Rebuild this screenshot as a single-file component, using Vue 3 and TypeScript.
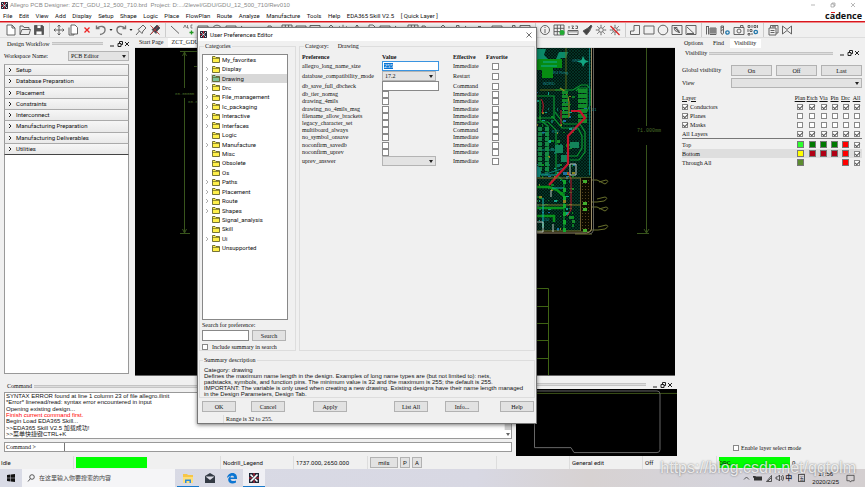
<script setup lang="ts">
import { ref } from 'vue'

interface Category { name: string; open: boolean }
interface Preference { name: string; kind: 'text' | 'select' | 'check'; value?: string; effective: string }
interface Layer { name: string; check?: boolean; cells: string[]; selected?: boolean }

const menus = ['File', 'Edit', 'View', 'Add', 'Display', 'Setup', 'Shape', 'Logic', 'Place', 'FlowPlan', 'Route', 'Analyze', 'Manufacture', 'Tools', 'Help', 'EDA365 Skill V2.5', '[ Quick Layer ]']

/* Icon bodies share a 14 x 14 box. */
const icons: Record<string, string> = {
  file: '<path d="M3 2h5l3 3v7H3zM8 2v3h3" fill="#fff"/>',
  open: '<path d="M2 11.500V3h3l1 1.500h5V6M2 11.500L4 6.500h8.500L11 11.500z" fill="#eee"/>',
  save: '<path d="M2.500 2.500h8l1 1v8h-9z" fill="#555"/><path d="M5 2.500v3h4v-3M4 11.500V8h6v3.500" fill="#fff"/>',
  move: '<path d="M7 2v10M2 7h10M5.500 3.500L7 2l1.500 1.500M5.500 10.500L7 12l1.500-1.500M3.500 5.500L2 7l1.500 1.500M10.500 5.500L12 7l-1.500 1.500"/>',
  copy: '<path d="M3 4.500v7.500h5v-1"/><path d="M5 2h4l2.500 2.500V11H5z" fill="#fff"/>',
  del: '<path d="M4.500 4.500l5 5M9.500 4.500l-5 5" stroke="#e22" stroke-width="1.300"/>',
  undo: '<path d="M2.500 2.500v3h3M3 5.500C6 2 11.500 3 11 7.500c-.4 2.500-2 3.500-5 4" stroke-width="1.400" stroke="#777"/>',
  redo: '<path d="M11.500 2.500v3h-3M11 5.500C8 2 2.500 3 3 7.500c.4 2.500 2 3.500 5 4" stroke-width="1.400" stroke="#777"/>',
  pin: '<path d="M2 12l3.500-4M4 6.500l4 4 1-2.500 3-3-3-3-3 3z" fill="#eee"/>',
  unpin: '<path d="M2 12l3.500-4M4 6.500l4 4 1-2.500 3-3-3-3-3 3z" fill="#345"/><path d="M2.500 2.500l9 9M11 2.500L3 11" stroke="#b33"/>',
  line: '<path d="M3 3l8 7.500"/>',
  text: '<path d="M1.500 5l1.500-3 1.500 3M5.500 2v3h1.500M10.500 2H9v3h1.500" stroke-width=".7"/><path d="M9.500 7.500v4M7.500 9.500h4" stroke="#292" stroke-width="1.300"/>',
  info: '<circle cx="7" cy="7" r="4.500"/><path d="M7 6v4M7 4v1"/>',
  grid: '<path d="M2 2h10v10H2zM2 5.300h10M2 8.600h10M5.300 2v10M8.600 2v10"/><circle cx="10" cy="9.500" r="2.500" fill="#2a3" stroke="none"/>',
  ruler: '<path d="M2 7.500h10v4H2zM4 7.500v2M6 7.500v2M8 7.500v2M10 7.500v2M3 3v2.500M5.500 3h2L6 5.500h2M9.500 3h2v2.500h-2"/>',
  brush: '<path d="M3 8l5-3 2 2.500L6.500 12zM8 5l3-3 1 1-2 4" fill="#444"/>',
  sun: '<circle cx="7" cy="7" r="2.300"/><path d="M7 1.800v2M7 10.200v2M1.800 7h2M10.200 7h2M3.300 3.300l1.400 1.400M9.300 9.300l1.400 1.400M10.700 3.300L9.300 4.700M4.700 9.300l-1.400 1.400"/>',
  sunoff: '<circle cx="7" cy="7" r="2.300"/><path d="M7 1.800v2M7 10.200v2M1.800 7h2M10.200 7h2M3.300 10.700l1.400-1.400M10.700 3.300L9.300 4.700"/><path d="M2.500 3l9 9" stroke="#d22" stroke-width="1.300"/>',
  poly: '<path d="M6 2.500h5.500v9h-9V8H6z"/>',
  rect: '<path d="M2 3h10v8H2z"/>',
  circle: '<circle cx="7" cy="7" r="4.800"/>',
  shapesel: '<path d="M2 2.500h10v9H2zM4 4.500h3v2l2 1v2l-4-2zM5 5l5 5"/>',
  wedge: '<path d="M2 2.500h10v9H2zM3 4l7 6.500H3"/>',
  drill: '<path d="M2.500 3v8.500M4.500 3v8.500M2.500 3.500h2M6 5h6v6.500H6zM6 7h6M6 9h6M8 5v6.500M10 5v6.500"/>',
  drillset: '<path d="M3 3h2.500v7L4.300 11.500 3 10zM3 5l2.500-1M3 7.500l2.500-1"/><circle cx="9.500" cy="9.500" r="1.700" stroke="#27a" stroke-width="1.300"/>',
  camera: '<path d="M2 4.500h10v7H2zM8.500 4V2.500H11V4.500"/><circle cx="7" cy="8" r="2"/>',
  param: '<path d="M2 2.500h2v2H2zM6 2v3M8 2.500h2v2H8zM2 6v3M4 6.500h2v2H4zM2 10.500h2v1.500H2zM6 10v2M11.500 2v3"/><circle cx="9.800" cy="9" r="1.700" stroke="#27a" stroke-width="1.300"/>',
  artwork: '<path d="M3 5h7v7H3zM4.500 5V2.500H12V10h-2M4.500 7.500h4M4.500 9.500h4M6 3.800h4"/>',
  bowtie: '<path d="M2.500 3v8L7 7.500 11.500 11V3L7 6.500z"/>',
}

const openTools = ['file', 'open', 'save']
const editTools = ['move', 'copy', 'del', 'undo', 'caret', 'redo', 'caret', 'pin', 'unpin']
const drawTools = ['line', 'text', 'rect', 'circle', 'rect', 'line', 'del', 'open', 'grid', 'rect', 'wedge', 'pin', 'sun', 'move', 'copy', 'rect', 'line', 'grid', 'open', 'pin', 'camera', 'line', 'drill', 'rect', 'camera', 'wedge']
const viewTools = ['info', 'grid', 'ruler', 'brush', 'sun', 'sunoff']
const toolGroups = [openTools, editTools, drawTools, viewTools, ['poly', 'rect', 'circle', 'shapesel', 'wedge'], ['drill', 'drillset', 'camera', 'param'], ['artwork', 'bowtie']]

const workflow = ['Setup', 'Database Preparation', 'Placement', 'Constraints', 'Interconnect', 'Manufacturing Preparation', 'Manufacturing Deliverables', 'Utilities']

const leaves = ['My_favorites', 'Logic', 'Misc', 'Obsolete', 'Os', 'Signal_analysis', 'Skill', 'Unsupported']
const categories: Category[] = ['My_favorites', 'Display', 'Drawing', 'Drc', 'File_management', 'Ic_packaging', 'Interactive', 'Interfaces', 'Logic', 'Manufacture', 'Misc', 'Obsolete', 'Os', 'Paths', 'Placement', 'Route', 'Shapes', 'Signal_analysis', 'Skill', 'Ui', 'Unsupported']
  .map((name) => ({ name, open: !leaves.includes(name) }))
const selected = ref('Drawing')

const flag = (name: string, effective = 'Immediate'): Preference => ({ name, kind: 'check', effective })
const preferenceBlocks: Preference[][] = [
  [
    { name: 'allegro_long_name_size', kind: 'text', value: '255', effective: 'Immediate' },
    { name: 'database_compatibility_mode', kind: 'select', value: '17.2', effective: 'Restart' },
    { name: 'db_save_full_dbcheck', kind: 'text', value: '', effective: 'Command' },
  ],
  [flag('db_tier_nomsg'), flag('drawing_4mils'), flag('drawing_no_4mils_msg'), flag('filename_allow_brackets'), flag('legacy_character_set'), flag('multiboard_always', 'Command'), flag('no_symbol_onsave'), flag('noconfirm_savedb'), flag('noconfirm_uprev')],
  [{ name: 'uprev_answer', kind: 'select', value: '', effective: 'Immediate' }],
]

const summary = [
  'Category: drawing',
  'Defines the maximum name length in the design. Examples of long name types are (but not limited to): nets,',
  'padstacks, symbols, and function pins. The minimum value is 32 and the maximum is 255; the default is 255.',
  'IMPORTANT: The variable is only used when creating a new drawing. Existing designs have their name length managed',
  'in the Design Parameters, Design Tab.',
]

const log = [
  'SYNTAX ERROR found at line 1 column 23 of file allegro.ilinit',
  '*Error* lineread/read: syntax error encountered in input',
  'Opening existing design...',
  'Finish current command first.',
  'Begin Load EDA365 Skill...',
  '>>EDA365 Skill V2.5 加载成功!',
  '>>菜单快捷键CTRL+K',
]

const layerHeads = ['Plan', 'Etch', 'Via', 'Pin', 'Drc', 'All']
const on = ['on', 'on', 'on', 'on', 'on', 'on']
const off = ['off', 'off', 'off', 'off', 'off', 'off']
const classRows: Layer[] = [
  { name: 'Conductors', check: true, cells: on },
  { name: 'Planes', check: true, cells: off },
  { name: 'Masks', check: true, cells: off },
  { name: 'All Layers', cells: on },
]
const layerRows: Layer[] = [
  { name: 'Top', cells: ['#2cff2c', '#007800', '#007800', '#007800', '#ff0000', 'on'] },
  { name: 'Bottom', cells: ['#ffff00', '#b00014', '#b00014', '#b00014', '#ff0000', 'on'], selected: true },
  { name: 'Through All', cells: ['#5c8c30', '', '', '', '#ff0000', 'on'] },
]

/* Repeatable scatter of pads over the visible part of the board. */
let seed = 7
const rnd = () => (seed = (seed * 16807) % 2147483647) / 2147483647
const padColors = ['#0a8f1e', '#0b7a26', '#12a08a', '#0c6b5c', '#178a2c', '#8a8420', '#1b6fa0']
const pads = Array.from({ length: 230 }, () => {
  const row = Math.floor(rnd() * 44)
  return {
    x: 536 + Math.floor(rnd() * 17) * 3,
    y: 56 + row * 4,
    w: 1 + Math.floor(rnd() * 3),
    h: 1 + Math.floor(rnd() * 3),
    fill: padColors[Math.floor(rnd() * padColors.length)],
  }
}).filter((p) => p.y > 88 && (p.x < 575 || (p.y < 118 && p.x > 574)))
const hooks = [180, 202, 208, 229]
</script>

<template>
  <div class="app">
    <header class="titlebar">
      <svg class="logo" viewBox="0 0 8 8"><rect width="8" height="8" fill="#222c3c" /><path d="M1 1l2 2M7 1L5 3M1 7l2-2M7 7L5 5M3 4h2" stroke="#fff" /><path d="M4 0v3M4 5v3M0 4h2" stroke="#d23" /></svg>
      <span>Allegro PCB Designer: ZCT_GDU_12_500_710.brd&nbsp; Project: D:.../2level/GDU/GDU_12_500_710/Rev010</span>
      <div class="winbtns">
        <button aria-label="Minimize"><svg viewBox="0 0 6 6"><path d="M1 3h4" /></svg></button>
        <button aria-label="Restore"><svg viewBox="0 0 6 6"><path d="M1 2h3v3H1zM2 2V1h3v3H4" /></svg></button>
        <button aria-label="Close"><svg viewBox="0 0 6 6"><path d="M1 1l4 4M5 1L1 5" /></svg></button>
      </div>
    </header>
    <nav class="menubar">
      <div class="menus"><a v-for="m in menus" :key="m" href="#">{{ m }}</a></div>
      <strong class="brand">c<i>a</i>dence</strong>
    </nav>
    <div class="toolbar">
      <div v-for="(g, gi) in toolGroups" :key="gi" class="tools">
        <button v-for="(t, ti) in g" :key="ti" :class="{ caret: t === 'caret' }" :aria-label="t">
          <svg v-if="t !== 'caret'" viewBox="0 0 14 14" v-html="icons[t]"></svg>
          <svg v-else viewBox="0 0 6 14"><path d="M1.500 6h3l-1.500 2z" fill="#222" stroke="none" /></svg>
        </button>
      </div>
    </div>

    <div class="workspace">
      <section class="center">
        <div class="upper">
          <aside class="workflow">
            <div class="dockhead"><span>Design Workflow</span><hr /><svg class="dockicons" viewBox="0 0 20 8"><path d="M1 6h4M9 3.500h3v3H9zM10.500 3V1.500h3v3H12M16 2l4 4M20 2l-4 4" /></svg></div>
            <div class="wsname"><label for="ws">Workspace Name:</label><span class="select"><select id="ws"><option>PCB Editor</option></select></span></div>
            <div class="accordion">
              <button v-for="w in workflow" :key="w"><svg viewBox="0 0 4 6"><path d="M1 1l2 2-2 2" /></svg>{{ w }}</button>
            </div>
            <div class="blank"></div>
          </aside>
          <div class="editor">
            <div class="doctabs"><a href="#">Start Page</a><a href="#" class="active">ZCT_GDU_12_500_710</a></div>
            <svg class="board" viewBox="135 48 540 327" preserveAspectRatio="xMinYMin slice">
              <defs>
                <pattern id="hatch" width="3" height="3" patternUnits="userSpaceOnUse"><rect width="3" height="3" fill="#00170f" /><path d="M0 3L3 0M0 0l3 3" stroke="#064636" stroke-width=".5" /></pattern>
                <pattern id="dots" width="3" height="3" patternUnits="userSpaceOnUse"><rect width="3" height="3" fill="#0d0a00" /><path d="M0 0h1v1H0z" fill="#54421c" stroke="none" /></pattern>
              </defs>
              <g fill="none" stroke="#38541c">
                <path d="M184.500 52v36M184.500 98v135M180 51.500h17M182.500 56l2-4 2 4M180 233.500h10M182.500 229l2 4 2-4M194 66.500h5" />
                <path d="M646.500 48v78M646.500 145v88M637 233.500h12M644 229l2.500 4 2.500-4" />
                <path d="M536 288.500h12.500V375M536 306.500h12M536 323.500h12M536 340.500h12M536 358.500h12" stroke="#3f6414" />
              </g>
              <g class="dims"><text x="175" y="95">80.000mm</text><text x="188" y="103">60.000</text><text class="big" x="637" y="132">71.000mm</text></g>
              <rect x="500" y="48" width="91" height="183" fill="url(#hatch)" />
              <g stroke="none">
                <path d="M536 49h10l-2 6 4 4h8l3-7h9l-2 6h-5l-3 4h-22z" fill="#0b8a68" />
                <path d="M538 59h24v9h-9v10h-11v-8h-6v-8z" fill="#078b12" />
                <path d="M583 56l2 4 4 1.500-4 1.500-2 4-1.500-4-4.500-1.500 4.500-1.500z" fill="#12a682" />
              </g>
              <path d="M543 62h14M541 66h16" stroke="#0db09a" />
              <path d="M566 48v42h-26" fill="none" stroke="#5c6c18" />
              <g fill="none" stroke="#0a9630" stroke-width="1.200">
                <path d="M555 90h18l8-5h6l3 4v16l-4 8" /><path d="M576 91l3-3h8v18l-6 6" />
                <path d="M552 116l10 12h16l4 8v12l-5 8h-8" /><path d="M555 112l9 12h16l5 8v20l-6 8h-9" />
                <path d="M560 88q8 4 9 14v16" stroke="#988f1d" /><path d="M536 96h18v22h-18M540 100v20l8 6v46" />
                <path d="M536 122h12l8 8v44l8 8v48" /><path d="M536 150h22M536 174h10l18-6" stroke="#0b7a76" />
              </g>
              <rect v-for="(p, i) in pads" :key="i" :x="p.x" :y="p.y" :width="p.w" :height="p.h" :fill="p.fill" />
              <g fill="#128b2a"><rect v-for="n in 7" :key="n" x="562" :y="87 + n * 4" width="6" height="3" /><rect v-for="n in 7" :key="-n" x="578" :y="84 + n * 5" width="9" height="4" /></g>
              <g fill="#148a45"><rect v-for="n in 9" :key="n" x="538" :y="122 + n * 5" width="4" height="4" /><rect v-for="n in 9" :key="-n" x="545" :y="122 + n * 5" width="4" height="4" /></g>
              <path d="M555 145h8v8h-8zM570 142h9v6h-9zM561 155h8v7h-8z" fill="#13845a" stroke="none" />
              <g fill="none" stroke="#08921c" stroke-width="2.500"><path d="M536 187h13l8 3 7 6M536 208h28M536 216h18v6" /></g>
              <path d="M536 165q7 3 4 12h-4z" fill="#11877c" stroke="none" />
              <path d="M541 175h17M552 188h12M543 198v30" stroke="#15a5a0" stroke-width="1.200" />
              <g fill="none" stroke="#c5162c"><path d="M571 111h9l5 7-17 18v28l-19 21" stroke-width="2.200" /><path d="M541 99q4 5 1 14M561 110v14M568 172l3 7v31l-4 6" /></g>
              <path d="M536 178h55v53h-55M536 205h55" fill="none" stroke="#7c7a2e" />
              <rect x="580" y="178" width="11" height="53" fill="url(#dots)" />
              <path d="M580.500 178v53" stroke="#9a8446" stroke-width=".7" />
              <path d="M570 164h6v11h-6zM536 222h7v10h-7M553 224v8M551 190v7" fill="none" stroke="#b9c9c2" />
              <g v-for="h in hooks" :key="h"><rect x="583" :y="h" width="4" height="3" fill="#42ae2e" /></g>
              <g fill="#12a82e"><rect v-for="n in 7" :key="n" x="563" :y="172 + n * 8" width="3" height="4" /></g>
              <g fill="none" stroke="#69702c"><path d="M591 180h6l8 4q5-3 1-4l-7 2M591 202h6l7-1q5-3 1-4l-8 2M591 207h6l8 4q5-3 1-4l-7 2M591 230h7l7-1q5-3 1-4l-8 2M575 234h17" /></g>
              <path d="M589.500 48v127" stroke="#0b746e" /><path d="M591.500 48v181q-1 4-5 4H536" fill="none" stroke="#9a8b68" /><path d="M593.500 48v182q-1 4-4 4" fill="none" stroke="#60605a" />
              <g class="refs"><text x="572" y="62">GND</text><text x="553" y="74">R4 Riing</text><text x="543" y="85">W2RD</text><text x="592" y="111">L1</text><text x="552" y="133">R22</text><text x="570" y="130">C14</text><text x="542" y="221">U10</text></g>
            </svg>
          </div>
        </div>
        <div class="lower">
          <section class="command">
            <div class="dockhead"><span>Command</span><hr /></div>
            <div class="log"><p v-for="(l, i) in log" :key="i" :class="{ error: i === 3 }">{{ l }}</p><span class="scroll"></span></div>
            <div class="entry"><label for="cmd">Command &gt;</label><input id="cmd" type="text" /></div>
          </section>
          <section class="world">
            <div class="dockhead"><hr /><svg class="dockicons" viewBox="0 0 20 8"><path d="M1 6h4M9 3.500h3v3H9zM10.500 3V1.500h3v3H12M16 2l4 4M20 2l-4 4" /></svg></div>
            <svg class="map" viewBox="0 0 161 68" preserveAspectRatio="none"><rect width="161" height="68" fill="#000" /><path d="M0 4.500h161" stroke="#3c5318" /><path d="M18.500 2v57.500H55l3 5h83q3 0 3-3V5q0-3-3-3H18" fill="none" stroke="#686868" /></svg>
          </section>
        </div>
      </section>

      <aside class="visibility">
        <div class="docktabs"><a href="#">Options</a><a href="#">Find</a><a href="#" class="active">Visibility</a></div>
        <div class="dockhead"><span>Visibility</span><hr /><svg class="dockicons" viewBox="0 0 20 8"><path d="M1 6h4M9 3.500h3v3H9zM10.500 3V1.500h3v3H12M16 2l4 4M20 2l-4 4" /></svg></div>
        <div class="global"><span>Global visibility</span><button class="btn">On</button><button class="btn">Off</button><button class="btn">Last</button></div>
        <div class="viewrow"><label for="view">View</label><span class="select"><select id="view"><option></option></select></span></div>
        <table class="layers">
          <thead><tr><th>Layer</th><th v-for="h in layerHeads" :key="h">{{ h }}</th></tr></thead>
          <tbody>
            <tr v-for="r in classRows" :key="r.name">
              <th><label v-if="r.check"><input type="checkbox" checked />{{ r.name }}</label><template v-else>{{ r.name }}</template></th>
              <td v-for="(c, i) in r.cells" :key="i"><input type="checkbox" :checked="c === 'on'" :aria-label="r.name + ' ' + layerHeads[i]" /></td>
            </tr>
          </tbody>
          <tbody class="colors">
            <tr v-for="r in layerRows" :key="r.name" :class="{ selected: r.selected }">
              <th>{{ r.name }}</th>
              <td v-for="(c, i) in r.cells" :key="i">
                <input v-if="c === 'on'" type="checkbox" checked :aria-label="r.name + ' ' + layerHeads[i]" />
                <button v-else-if="c" class="swatch" :style="{ background: c }" :aria-label="r.name + ' ' + layerHeads[i]"></button>
              </td>
            </tr>
          </tbody>
        </table>
        <label class="enable"><input type="checkbox" />Enable layer select mode</label>
      </aside>
    </div>

    <footer class="status">
      <div>Idle</div><div><b class="green"></b></div><div class="file">Nodrill_Legend</div><div>1737.000, 2650.000</div>
      <div class="units"><button class="btn">mils</button><button class="btn">P</button><button class="btn">A</button></div>
      <div></div><div>General edit</div><div>Off</div><div><b class="green">DRC</b>0</div>
    </footer>

    <footer class="taskbar">
      <button class="start" aria-label="Start"><svg viewBox="0 0 8 8"><path d="M0 1l3.500-.500v3.200H0zM4 .400L8 0v3.700H4zM0 4.200h3.500v3.200L0 7zM4 4.200h4V8l-4-.500z" fill="#111" /></svg></button>
      <label class="search"><svg viewBox="0 0 8 8"><circle cx="5" cy="3" r="2.300" fill="none" stroke="#333" stroke-width=".8" /><path d="M3.300 4.700L1 7.500" stroke="#333" stroke-width=".8" /></svg><input type="text" placeholder="在这里输入你要搜索的内容" aria-label="Search" /></label>
      <div class="pinned">
        <button class="run" aria-label="Files"><svg viewBox="0 0 12 12"><path d="M1 2h4l1 1h5v8H1z" fill="#f6c648" /><path d="M1 5h10v6H1z" fill="#ffdf78" /><path d="M3 11V7.500h6V11H7.500V9h-3v2z" fill="#2b8bd8" /></svg></button>
        <button aria-label="Mail"><svg viewBox="0 0 12 12"><path d="M1 4l5-3 5 3v7H1z" fill="#333a44" /><path d="M1.500 4.500h9L6 8z" fill="#dcdce6" /></svg></button>
        <button aria-label="Browser"><svg viewBox="0 0 12 12"><path d="M1 6C1.500 2.500 4 1 6.500 1 10 1 11.300 4 11 7H4.500c.5 2.500 3.500 2.500 5.500 1.500V10.500C6 12.500 2 11 2.200 7.500 2.400 5.500 4 4 5.500 3.500 4.700 4.200 4.500 5 4.500 5.500h3.700C8 3 4 3 1 6z" fill="#0d76d2" /></svg></button>
        <button class="run active" aria-label="PCB Designer"><svg viewBox="0 0 12 12"><rect x="1" y="1" width="10" height="10" fill="#1c2636" /><path d="M2.500 2.500l2.500 2.500M9.500 2.500l-7 7M7 7l2.500 2.500" stroke="#fff" stroke-width="1.600" /><path d="M6 1v3M6 8v3M1 6h3M8 6h3" stroke="#d23" /></svg></button>
      </div>
      <div class="tray">
        <svg viewBox="0 0 42 10"><path d="M2 6.500l2.500-2.500L7 6.500M24.500 8.500l5-6v6zM26 8l3-3M34 4h1.500l2-2v6l-2-2H34zM39 3q2 2 0 4M40.500 2q2.500 3 0 6" fill="none" stroke="#333" stroke-width=".8" /><path d="M12 3.500h8v4h-8zM11 5V3h3" fill="#333" stroke="none" /></svg>
        <b>中</b><b class="ime">五</b>
        <time>17:56<br />2020/2/25</time>
        <svg class="note" viewBox="0 0 10 10"><path d="M1 1.500h8v6H6L5 9 4 7.500H1z" fill="none" stroke="#333" stroke-width=".8" /></svg>
      </div>
    </footer>

    <section class="dialog" role="dialog" aria-label="User Preferences Editor">
      <header>
        <svg class="logo" viewBox="0 0 8 8"><rect width="8" height="8" fill="#222c3c" /><path d="M1 1l2 2M7 1L5 3M1 7l2-2M7 7L5 5M3 4h2" stroke="#fff" /><path d="M4 0v3M4 5v3M0 4h2" stroke="#d23" /></svg>
        <h1>User Preferences Editor</h1>
        <button aria-label="Close"><svg viewBox="0 0 6 6"><path d="M.5 .5l5 5M5.500 .5l-5 5" /></svg></button>
      </header>
      <div class="panes">
        <fieldset class="cats">
          <legend>Categories</legend>
          <ul>
            <li v-for="c in categories" :key="c.name" :class="{ selected: selected === c.name }" @click="selected = c.name">
              <svg class="chev" viewBox="0 0 4 6"><path v-if="c.open" d="M1 1l2 2-2 2" /></svg>
              <span><svg viewBox="0 0 8 7"><path d="M.5 6.500v-6h2.500l1 1h3.500v5z" :fill="selected === c.name ? '#7fc49a' : '#fff04a'" stroke="#54521c" stroke-width=".8" /><path d="M.5 2.500h7" stroke="#54521c" stroke-width=".6" /></svg>{{ c.name }}</span>
            </li>
          </ul>
          <label for="find">Search for preference:</label>
          <div class="find"><input id="find" type="text" /><button class="btn">Search</button></div>
          <label class="include"><input type="checkbox" />Include summary in search</label>
        </fieldset>
        <fieldset class="prefs">
          <legend>Category:<span>Drawing</span></legend>
          <table>
            <thead><tr><th>Preference</th><th>Value</th><th>Effective</th><th>Favorite</th></tr></thead>
            <tbody v-for="(block, bi) in preferenceBlocks" :key="bi" :class="'block' + bi">
              <tr v-for="p in block" :key="p.name">
                <td><label :for="p.name">{{ p.name }}</label></td>
                <td>
                  <input v-if="p.kind === 'text'" :id="p.name" type="text" :value="p.value" :class="{ focused: p.value }" />
                  <span v-else-if="p.kind === 'select'" class="select"><select :id="p.name"><option>{{ p.value }}</option></select></span>
                  <input v-else :id="p.name" type="checkbox" />
                </td>
                <td>{{ p.effective }}</td>
                <td><input type="checkbox" :aria-label="'Favorite ' + p.name" /></td>
              </tr>
            </tbody>
          </table>
        </fieldset>
      </div>
      <fieldset class="summary">
        <legend>Summary description</legend>
        <p v-for="s in summary" :key="s">{{ s }}</p>
      </fieldset>
      <div class="actions">
        <button class="btn">OK</button><button class="btn">Cancel</button><button class="btn">Apply</button><button class="btn">List All</button><button class="btn">Info...</button><button class="btn">Help</button>
      </div>
      <p class="range">Range is 32 to 255.</p>
    </section>

    <div class="watermark">https://blog.csdn.net/qqtolm</div>
  </div>
</template>

<style>
body { margin: 0; background: #f0f0f0; overflow: hidden; }
</style>

<style scoped>
.app { --ui: Roboto, "Noto Sans CJK SC", sans-serif; --song: "Liberation Serif", "Noto Sans CJK SC", serif; --wide: "Liberation Sans", "Noto Sans CJK SC", sans-serif; position: relative; display: flex; flex-direction: column; height: 100vh; background: #f0f0f0; color: #111; font: 6px/8px var(--song); }
* { box-sizing: border-box; }
button, input, select { margin: 0; padding: 0; border: 0; background: none; font: inherit; color: inherit; min-width: 0; }
a { color: inherit; text-decoration: none; }
p, ul, h1 { margin: 0; padding: 0; }
svg { display: block; fill: none; stroke: #333; }
svg rect, svg text { stroke: none; }
table { border-collapse: collapse; }
th { font-weight: 400; text-align: left; }

.titlebar { display: flex; align-items: center; gap: 2px; height: 10px; padding-left: 1px; background: #fff; color: #888; font-family: var(--wide); }
.logo { width: 7px; height: 7px; }
.winbtns { display: flex; gap: 14px; margin-left: auto; padding-right: 9px; }
.winbtns svg { width: 6px; height: 6px; stroke: #888; stroke-width: .6; }
.menubar { display: flex; align-items: center; height: 12px; padding: 0 3px; background: #fff; border-bottom: 1px solid #d8161e; font-family: var(--ui); white-space: nowrap; }
.menus { display: flex; justify-content: space-between; width: 435px; }
.brand { margin-left: auto; font: 700 9px/10px "Open Sans", sans-serif; }
.brand i { position: relative; font-style: normal; }
.brand i::after { content: ""; position: absolute; left: 1px; top: 3px; width: 4px; height: 1px; background: #d22; }
.toolbar { display: flex; height: 16px; padding-left: 4px; border-top: 1px solid #e88; border-bottom: 1px solid #ddd; }
.tools { display: flex; align-items: center; flex: none; }
.tools + .tools { margin-left: 3px; padding-left: 2px; border-left: 1px solid #ccc; }
.tools button { width: 14px; height: 14px; }
.tools button.caret { width: 6px; }
.tools svg { width: 100%; height: 14px; stroke: #555; stroke-width: .9; }

.workspace { display: flex; flex: 1; min-height: 0; }
.center { display: flex; flex-direction: column; flex: 1; min-width: 0; }
.upper { display: flex; flex: 1; min-height: 0; }
.workflow { display: flex; flex-direction: column; width: 132px; padding: 1px 3px 2px 4px; }
.dockhead { display: flex; align-items: center; gap: 2px; height: 9px; padding: 0 3px; }
.workflow .dockhead { padding-right: 0; }
.dockhead hr { flex: 1; height: 3px; margin: 0 4px 0 0; border: solid #c4c4c4; border-width: 1px 0; background: #ddd; }
.dockicons { width: 20px; height: 8px; stroke: #222; }
.wsname { display: flex; align-items: center; justify-content: space-between; height: 16px; }
.wsname .select { width: 61px; }
.select { position: relative; display: block; height: 10px; }
.select::after { content: ""; position: absolute; right: 3px; top: 4px; border: 2px solid transparent; border-top: 3px solid #222; border-bottom: 0; }
select { display: block; width: 100%; height: 100%; padding-left: 2px; appearance: none; background: #e3e3e3; border: 1px solid #b4b4b4; border-radius: 0; }
.accordion { display: grid; grid-template-rows: repeat(8, 1fr); height: 90px; }
.accordion button { display: flex; align-items: center; gap: 4px; padding-left: 3px; border: 1px solid #999; border-bottom-width: 0; border-top-color: #aaa; background: linear-gradient(#f6f6f6, #e9e9e9); font-family: var(--ui); }
.accordion svg { width: 4px; height: 6px; stroke: #222; }
.blank { flex: 1; background: #fff; border: 1px solid #999; border-top-color: #444; }
.editor { display: flex; flex-direction: column; flex: 1; min-width: 0; margin: 0 3px; border-bottom: 1px solid #666; background: #000; }
.doctabs { display: flex; height: 10px; background: #f0f0f0; border-bottom: 1px solid #ddd; }
.doctabs a { padding: 0 4px; line-height: 9px; }
.doctabs .active { background: #fff; }
.board { width: 540px; flex: 1; min-height: 0; background: #000; }
.dims text { fill: #4a6c28; font: 4px "Liberation Mono", monospace; }
.dims .big { font-size: 5px; }
.refs text { fill: #1a8e96; font: 4px "Liberation Sans", sans-serif; }

.lower { display: flex; height: 80px; gap: 4px; padding-top: 4px; }
.command { display: flex; flex-direction: column; flex: 1; padding: 0 0 4px 4px; }
.command .dockhead { height: 12px; }
.log { position: relative; display: flex; flex-direction: column; justify-content: space-between; flex: 1; min-height: 0; margin-bottom: 3px; padding: 0 1px 1px; background: #fff; border: 1px solid #999; }
.log p, .summary p { height: 6px; font-family: var(--wide); line-height: 6px; white-space: nowrap; }
.log .error { color: #f00; }
.scroll { position: absolute; top: 0; right: 0; bottom: 8px; width: 7px; background: #cdcdcd; border-left: 1px solid #eee; }
.scroll::after { content: ""; position: absolute; top: 100%; left: 1px; margin-top: 3px; border: 2px solid transparent; border-top: 3px solid #666; border-bottom: 0; }
.entry { display: flex; height: 10px; background: #fff; border: 1px solid #999; }
.entry label { width: 60px; padding-left: 1px; border-right: 1px solid #777; }
.entry input { flex: 1; }
.world { display: flex; flex-direction: column; width: 161px; margin-right: 1px; }
.world .dockhead { padding-right: 5px; }
.map { width: 100%; flex: 1; min-height: 0; }

.visibility { display: flex; flex-direction: column; width: 187px; padding: 1px 3px 3px 4px; }
.docktabs { display: flex; height: 9px; gap: 1px; }
.docktabs a { padding: 0 5px 0 4px; line-height: 9px; }
.docktabs a:first-child { padding-left: 2px; }
.docktabs .active { background: #fff; }
.visibility .dockhead { height: 10px; }
.global { display: grid; grid-template-columns: 45px 1fr 1fr 1fr; gap: 4px; height: 11px; margin-top: 7px; white-space: nowrap; }
.global span { line-height: 11px; }
.btn { display: block; border: 1px solid #b2b2b2; background: #e2e2e2; text-align: center; white-space: nowrap; line-height: 8px; }
.viewrow { display: grid; grid-template-columns: 49px 1fr; height: 10px; margin-top: 2px; line-height: 10px; }
.layers { display: block; margin-top: 5px; }
.layers thead, .layers tbody { display: block; }
.layers tr { display: grid; grid-template-columns: 1fr 12px 12px 11px 11px 11px 11px; align-items: center; height: 9px; }
.layers thead { text-decoration: underline; }
.layers thead th + th, .layers td { display: flex; justify-content: center; padding: 0; }
.layers th { padding: 0; white-space: nowrap; }
.layers label { display: flex; align-items: center; gap: 2px; }
.layers .colors { padding-top: 1px; border-top: 1px solid #777; }
.layers .selected { background: #dedede; }
.swatch { width: 7px; height: 7px; border: 1px solid #777; }
input[type="checkbox"] { position: relative; flex: none; display: block; width: 6px; height: 6px; appearance: none; background: #fff; border: 1px solid #888; }
input[type="checkbox"]:checked::after { content: ""; position: absolute; left: 1px; top: -1px; width: 2px; height: 4px; border: solid #555; border-width: 0 1px 1px 0; transform: rotate(45deg); }
.enable { display: flex; align-items: center; gap: 2px; margin: auto 0 1px 51px; }

.status { display: grid; grid-template-columns: 74fr 147fr 73fr 74fr 129fr 73fr 73fr 74fr 148fr; height: 13px; background: #f0f0f0; font-family: var(--ui); }
.status div { display: flex; align-items: center; gap: 2px; padding: 1px 1px 1px 2px; border-right: 1px solid #ddd; white-space: nowrap; }
.status div:first-child { padding-left: 1px; }
.status div:last-child { border: 0; }
.green { width: 71px; height: 11px; background: #0f0; font-weight: 400; line-height: 11px; }
.units .btn { width: 10px; height: 11px; }
.units .btn:first-child { width: 28px; }
.taskbar { display: flex; height: 18px; background: linear-gradient(90deg, #d9dbe6, #d8d8e3 55%, #d7d2d2 68%, #d5d4dc 85%, #d4cfd0); font-family: var(--ui); }
.start { width: 22px; padding: 5px 7px; }
.start svg { width: 8px; height: 8px; stroke: none; }
.search { display: flex; align-items: center; gap: 4px; width: 153px; padding-left: 5px; background: #f5f5f7; }
.search svg { width: 8px; height: 8px; }
.search input { flex: 1; }
.search input::placeholder { color: #444; opacity: 1; }
.pinned { display: flex; margin-left: 2px; }
.pinned button { display: flex; align-items: center; justify-content: center; width: 22px; border-bottom: 1px solid transparent; }
.pinned .run { border-bottom-color: #1979ca; }
.pinned .active { background: #f0f0f5; }
.pinned svg { width: 12px; height: 12px; stroke: none; }
.tray { display: flex; align-items: center; gap: 5px; margin-left: auto; padding-right: 10px; }
.tray svg { width: 42px; height: 10px; }
.tray b { margin-left: -4px; font-size: 7px; color: #223; }
.tray .ime { margin-left: 1px; border: 1px solid #555; font-size: 5px; line-height: 6px; font-weight: 400; }
.tray time { margin-left: 2px; text-align: center; font-family: var(--wide); }
.tray .note { width: 9px; height: 9px; margin-left: 2px; }

.dialog { position: absolute; left: 197px; top: 27px; display: flex; flex-direction: column; width: 340px; height: 397px; padding: 0 1px; background: #f0f0f0; border: 1px solid #777; box-shadow: 0 1px 4px #0008; }
.dialog header { display: flex; align-items: center; gap: 3px; height: 13px; margin: 0 -1px; padding: 0 4px 0 2px; background: #fff; font-family: var(--ui); }
.dialog h1 { font-size: 6px; font-weight: 400; }
.dialog header button { margin-left: auto; }
.dialog header button svg { width: 6px; height: 6px; stroke-width: .7; }
fieldset { margin: 0; padding: 0; border: 1px solid #ddd; min-width: 0; }
legend { padding: 0 1px; margin-left: 2px; }
.panes { display: flex; gap: 3px; height: 310px; padding-top: 1px; }
.cats { width: 97px; padding: 4px 7px 0 2px; }
.cats ul { display: grid; grid-template-rows: repeat(21, 1fr); height: 266px; padding-bottom: 66px; background: #fff; border: 1px solid #888; list-style: none; font-family: var(--ui); }
.cats li { display: flex; align-items: center; padding-left: 2px; }
.chev { width: 4px; height: 6px; margin-right: 2px; stroke: #999; stroke-width: .8; }
.cats li span { display: flex; align-items: center; flex: 1; gap: 2px; height: 9px; padding-left: 1px; }
.cats li span svg { width: 8px; height: 7px; }
.cats .selected span { background: #d8d8d8; }
.cats > label { display: block; height: 10px; line-height: 10px; }
.find { display: flex; gap: 3px; height: 11px; }
input[type="text"] { min-width: 0; }
.find input { width: 47px; background: #fff; border: 1px solid #888; }
.find .btn { width: 34px; }
.cats .include { display: flex; align-items: center; gap: 4px; height: 9px; margin-top: 1px; white-space: nowrap; }
.prefs { flex: 1; padding: 3px 0 0 2px; }
.prefs legend span { margin-left: 9px; }
.prefs table, .prefs thead, .prefs tbody { display: block; }
.prefs tr { display: grid; grid-template-columns: 80px 71px 33px 1fr; align-items: center; height: 10px; }
.prefs thead tr { height: 8px; }
.prefs thead th { padding: 0; font-weight: 700; }
.prefs .block1 { display: grid; grid-template-rows: repeat(9, 1fr); height: 65px; line-height: 7px; }
.prefs .block1 tr { height: auto; min-height: 0; }
.prefs td { padding: 0; }
.prefs td:last-child { padding-left: 6px; }
.prefs .select { width: 54px; }
.prefs input[type="text"] { display: block; width: 57px; height: 10px; padding-left: 1px; background: #fff; border: 1px solid #888; }
.prefs input.focused { border-color: #3a94e0; background: linear-gradient(#0a74d4, #0a74d4) 1px 1px / 9px 6px no-repeat #fff; color: #fff; }
.prefs input[type="checkbox"] { width: 7px; height: 7px; }
.summary { display: flex; flex-direction: column; height: 42px; margin-top: 5px; padding: 0 0 0 4px; }
.summary legend { margin-left: -1px; margin-bottom: 3px; }
.actions { display: grid; grid-template-columns: 34px 34px 34px 34px 34px 34px; column-gap: 15px; height: 11px; margin: 3px 0 0 3px; }
.actions .btn:nth-child(3) { margin: 0 -13px 0 13px; }
.actions .btn:nth-child(4) { margin: 0 -45px 0 45px; }
.actions .btn:nth-child(5) { margin: 0 -47px 0 47px; }
.actions .btn:nth-child(6) { margin: 0 -53px 0 53px; }
.range { margin: 3px 0 0 24px; padding-left: 2px; border-left: 1px solid #ddd; }

.watermark { position: absolute; right: 9px; bottom: 10px; font: 16px/18px "Liberation Sans", sans-serif; color: #fffc; text-shadow: 0 0 2px #0008; pointer-events: none; }
</style>
